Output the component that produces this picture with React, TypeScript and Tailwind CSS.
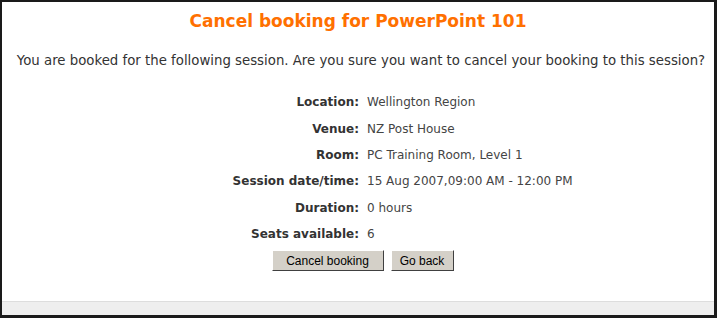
import React from 'react';

const rows: [string, string][] = [
  ['Location:', 'Wellington Region'],
  ['Venue:', 'NZ Post House'],
  ['Room:', 'PC Training Room, Level 1'],
  ['Session date/time:', '15 Aug 2007,09:00 AM - 12:00 PM'],
  ['Duration:', '0 hours'],
  ['Seats available:', '6'],
];

export default function App() {
  return (
    <div className="w-[717px] h-[318px] border-2 border-[#1a1a1a] border-r-[3px] border-b-[3px] bg-white flex flex-col font-['DejaVu_Sans',Verdana,sans-serif] text-[#333]">
      <div className="flex-1 flex flex-col">
        <h2 className="mt-[9px] text-center text-[17px] leading-[20px] font-bold text-[#ff7000]">
          Cancel booking for PowerPoint 101
        </h2>
        <p className="mt-[21px] pl-[6px] text-center text-[13.3px] leading-[18px] text-[#333] whitespace-nowrap">
          You are booked for the following session. Are you sure you want to cancel your booking to this session?
        </p>
        <div className="mt-[19px] grid grid-cols-[365px_1fr] text-[12px]">
          {rows.map(([label, value]) => (
            <React.Fragment key={label}>
              <div className="h-[26.4px] flex items-center justify-end pr-[8px] font-bold text-[#333]">{label}</div>
              <div className="h-[26.4px] flex items-center text-[#444]">{value}</div>
            </React.Fragment>
          ))}
        </div>
        <div className="mt-[3px] pl-[9px] flex justify-center gap-[7px]">
          <button className="w-[112px] h-[21px] bg-[#d4d0c8] border border-t-white border-l-white border-r-[#404040] border-b-[#404040] font-['Liberation_Sans',Arial,sans-serif] text-[12px] text-black">
            Cancel booking
          </button>
          <button className="w-[63px] h-[21px] bg-[#d4d0c8] border border-t-white border-l-white border-r-[#404040] border-b-[#404040] font-['Liberation_Sans',Arial,sans-serif] text-[12px] text-black">
            Go back
          </button>
        </div>
      </div>
      <div className="h-[14px] bg-[#eeeeee] border-t border-[#dddddd]" />
    </div>
  );
}
